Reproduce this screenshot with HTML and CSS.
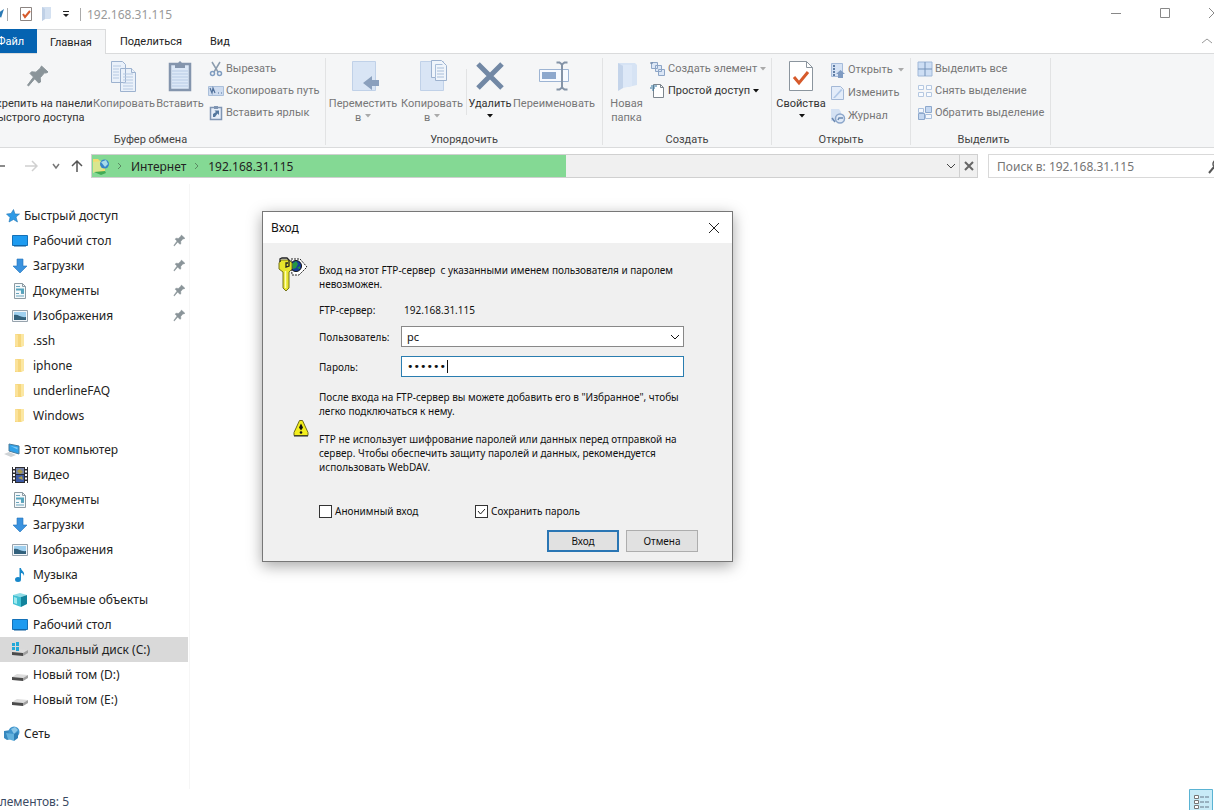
FILE: index.html
```
<!DOCTYPE html>
<html lang="ru">
<head>
  <meta charset="UTF-8" />
  <meta name="viewport" content="width=device-width, initial-scale=1" />
  <title>192.168.31.115</title>
  <link rel="stylesheet" href="styles.css">
</head>
<body>
  <!-- shared icons -->
  <svg class="sprite" aria-hidden="true">
    <symbol id="pin" viewBox="0 0 24 24">
      <path d="M15.500 2l6.500 6-2 1-1.500-.2-4.300 5 .3 4.200-1.800 1-4-4.200L2.500 22l-1-.8L7.500 13 4 9.500l1.500-1.700 4.500.4L14.500 4z" fill="#8a9499" stroke="#8a9499"/>
    </symbol>
    <symbol id="caret" viewBox="0 0 6 4"><path d="M0 0h6L3 3.500z" fill="currentColor"/></symbol>
    <symbol id="chevron" viewBox="0 0 10 6"><path d="M1 1l4 4 4-4" fill="none" stroke="currentColor"/></symbol>
    <symbol id="folder" viewBox="0 0 16 16">
      <path d="M3 1h7v13H3z" fill="#f6d67c"/><path d="M9 1h3v12l-3 1z" fill="#fbe7a3"/><path d="M3 1l3 1v12l-3-1z" fill="#fbe29a"/>
    </symbol>
    <symbol id="desktop" viewBox="0 0 16 14">
      <path d="M.5 1.500h15v10H.5z" fill="#1e9bf0" stroke="#1471b8"/><path d="M2 11.500h12v1H2z" fill="#0d5c9c"/>
    </symbol>
    <symbol id="download" viewBox="0 0 16 16"><path d="M5 1h6v7h4l-7 7-7-7h4z" fill="#3a92de" stroke="#2374ba" stroke-width=".6"/></symbol>
    <symbol id="doc" viewBox="0 0 16 16">
      <path d="M2.500.5h8l3 3v12h-11z" fill="#f4f8fa" stroke="#8d9ba3"/><path d="M10.500.5v3h3" fill="none" stroke="#8d9ba3"/>
      <path d="M4 3.500h4M4 10.500h3M9 10.500h3M4 13h8" stroke="#6aa5bd"/><path d="M4 5.500h8v2H4zM9 7h3v3H9z" fill="#54a4bd"/>
    </symbol>
    <symbol id="picture" viewBox="0 0 16 14">
      <path d="M.5 1.500h15v11H.5z" fill="#f3f6f9" stroke="#97a3ad"/><path d="M2 3h12v8H2z" fill="#9fd0ef"/>
      <path d="M2 6c4-1 7 3 12 2v3H2z" fill="#32617c"/>
    </symbol>
    <symbol id="computer" viewBox="0 0 16 16">
      <path d="M5 2l10 2v8L5 9z" fill="#2fa1e9" stroke="#4a7c9c"/><path d="M6.500 4l7 1.500v2z" fill="#82cbf5"/><path d="M0 12l5-2 7 3-5 2z" fill="#cfd3d6"/>
    </symbol>
    <symbol id="video" viewBox="0 0 16 16">
      <path d="M0 0h16v16H0z" fill="#2c2c30"/><path d="M4 1h8v6H4z" fill="#7683a8"/><path d="M4 8h8v7H4z" fill="#3d5aa5"/>
      <path d="M5 4l3-2 3 3-3 2zM6 11l4-2 1 4z" fill="#ab9b48"/><path d="M2 0v16M14 0v16" stroke="#fff" stroke-width="2" stroke-dasharray="2 1.500"/>
    </symbol>
    <symbol id="music" viewBox="0 0 16 16">
      <ellipse cx="6" cy="12.500" rx="3" ry="2.500" fill="#1687ca"/><path d="M7.500 1H9c0 3 4 3 3 8-.5-2-1.500-3-3-3v6H7.500z" fill="#1687ca"/>
    </symbol>
    <symbol id="cube" viewBox="0 0 16 16">
      <path d="M1 3l7-2 7 2-6 2z" fill="#8edce6"/><path d="M1 3l8 2v10l-8-3z" fill="#42c0d3"/><path d="M15 3L9 5v10l6-3z" fill="#12839c"/><path d="M2 5l3 1v6l-3-1z" fill="#9de9ee"/>
    </symbol>
    <symbol id="drive" viewBox="0 0 16 16">
      <path d="M0 10l5-3 11 1-5 3z" fill="#dcdcdc"/><path d="M0 10l11 1v3L0 13z" fill="#4b4b4b"/><path d="M11 11l5-3v3l-5 3z" fill="#a0a0a0"/>
    </symbol>
    <symbol id="globe" viewBox="0 0 16 16">
      <path d="M0 5l7-1v9l-4 1-3-2z" fill="#3688bf"/><circle cx="10" cy="6" r="5.500" fill="#3f94cc"/><path d="M7 3l4-2 3 3-4 4z" fill="#8cc7e8"/><path d="M2 7l8 1v7l-6-2z" fill="#62b1dd"/><path d="M10 8l4-2v6l-4 3z" fill="#2f7fb5"/>
    </symbol>
    <symbol id="sheet-check" viewBox="0 0 26 32">
      <path d="M1.500 1.500h17l6 6v23h-23z" fill="#fff" stroke="#8b959e"/><path d="M18.500 1.500v6h6" fill="none" stroke="#8b959e"/>
      <path d="M6 17l5 6 9-11" fill="none" stroke="#d65a2b" stroke-width="3"/>
    </symbol>
  </svg>

  <div class="explorer">
    <header class="titlebar">
      <svg class="icon-16" viewBox="0 0 16 16"><path d="M10 7l6-4-3 9z" fill="#2b7ab5"/></svg>
      <span class="divider"></span>
      <svg class="icon-16 title-check" viewBox="0 0 16 16"><path d="M2.500 1.500h11v13h-11z" fill="#fff" stroke="#8c8481"/><path d="M5 8l2 3 5-6" fill="none" stroke="#d65a2b" stroke-width="2"/></svg>
      <svg class="icon-16 title-folder" viewBox="0 0 16 16"><path d="M3 1h9v11l-1 1H6l-3 2z" fill="#d4e1f1"/><path d="M3 1l3 2v10l-3 2z" fill="#bfd0e6"/></svg>
      <svg class="title-menu" viewBox="0 0 8 8"><path d="M1 1.500h6" stroke="#222"/><path d="M1 4h6L4 7z" fill="#222"/></svg>
      <span class="divider"></span>
      <span class="title">192.168.31.115</span>
      <div class="window-buttons">
        <button aria-label="Свернуть"><svg viewBox="0 0 12 12"><path d="M1 6.500h10" stroke="#888"/></svg></button>
        <button aria-label="Развернуть"><svg viewBox="0 0 12 12"><path d="M1.500 1.500h9v9h-9z" fill="none" stroke="#888"/></svg></button>
        <button aria-label="Закрыть"><svg viewBox="0 0 12 12"><path d="M1 1l10 10M11 1L1 11" stroke="#888"/></svg></button>
      </div>
    </header>

    <nav class="tabs">
      <button class="tab tab-file">Файл</button>
      <button class="tab tab-active">Главная</button>
      <button class="tab">Поделиться</button>
      <button class="tab">Вид</button>
      <button class="collapse" aria-label="Свернуть ленту"><svg viewBox="0 0 12 8"><path d="M1 6l5-4 5 4" fill="none" stroke="#999"/></svg></button>
    </nav>

    <div class="ribbon">
      <section class="group group-clipboard">
        <div class="group-tools">
          <button class="big big-pin enabled"><svg class="icon-24"><use href="#pin"/></svg><span>Закрепить на панели<br>быстрого доступа</span></button>
          <button class="big big-copy">
            <svg viewBox="0 0 32 32"><g fill="#eaf1fa" stroke="#9db2cf"><path d="M3.500 1.500h11l3 3v18h-14zM12.500 8.500h11l4 4v19h-15z"/><path d="M23.500 8.500v4h4"/></g><path d="M5 6h8M5 9h6M5 12h6M5 15h6M5 18h6M15 14h10M15 17h10M15 20h10M15 23h10M15 26h10M15 29h10" stroke="#b6c9e2"/></svg>
            <span>Копировать</span></button>
          <button class="big big-paste">
            <svg viewBox="0 0 32 32"><path d="M6 4h20v26H6z" fill="#dce8f7" stroke="#8495ad" stroke-width="2.500"/><path d="M11 5h3c0-5 4-5 4 0h3v3H11z" fill="#8495ad"/><path d="M8 11h16M8 14h16M8 17h16M8 20h16M8 23h16M8 26h16" stroke="#b8cbe5"/></svg>
            <span>Вставить</span></button>
          <div class="small-list">
            <button class="small"><svg class="icon-16" viewBox="0 0 16 16"><path d="M4 1l6 10M12 1L6 11" stroke="#8b9cae" stroke-width="1.500"/><circle cx="4.500" cy="12.500" r="2" fill="none" stroke="#7f9cc0" stroke-width="1.500"/><circle cx="11.500" cy="12.500" r="2" fill="none" stroke="#7f9cc0" stroke-width="1.500"/></svg>Вырезать</button>
            <button class="small"><svg class="icon-16" viewBox="0 0 16 16"><path d="M.5 3.500h15v9H.5z" fill="#cedcf0" stroke="#aabfda"/><path d="M2 5l2 5 1-5 2 5M10 10h1M13 10h1" fill="none" stroke="#51719b" stroke-width="1.200"/></svg>Скопировать путь</button>
            <button class="small"><svg class="icon-16" viewBox="0 0 16 16"><path d="M2.500 2.500h11v12h-11z" fill="#e6eef9" stroke="#7f95b3" stroke-width="1.500"/><path d="M6 1h4v3H6z" fill="#7f95b3"/><path d="M5 12V9l3-2-1.500-1.500H11V10L9.500 8.500 7 12z" fill="#54789f"/></svg>Вставить ярлык</button>
          </div>
        </div>
        <div class="group-name">Буфер обмена</div>
      </section>

      <section class="group group-organize">
        <div class="group-tools">
          <button class="big big-move">
            <svg viewBox="0 0 32 32"><path d="M5.500 1.500h23v29h-23z" fill="#d9e5f5" stroke="#c0d1e8"/><path d="M16 23l9-7v4h7v6h-7v4z" fill="#8ba0bd"/></svg>
            <span>Переместить<br>в <svg class="caret"><use href="#caret"/></svg></span></button>
          <button class="big big-copy">
            <svg viewBox="0 0 32 32"><path d="M4.500 1.500h23v29h-23z" fill="#d9e5f5" stroke="#c0d1e8"/><path d="M15.500.5h10l5 5v15h-11v-3h-4z" fill="#f0f5fb" stroke="#9db2cf"/><path d="M19.500 17V4.500h7M21 8h7M21 11h7M21 14h7M21 17h7" fill="none" stroke="#a9bed9"/></svg>
            <span>Копировать<br>в <svg class="caret"><use href="#caret"/></svg></span></button>
          <span class="tool-line"></span>
          <button class="big big-delete enabled">
            <svg viewBox="0 0 32 32"><path d="M4 4l24 24M28 4L4 28" stroke="#7288a5" stroke-width="5"/></svg>
            <span>Удалить<br><svg class="caret"><use href="#caret"/></svg></span></button>
          <button class="big big-rename">
            <svg viewBox="0 0 32 32"><path d="M1.500 9.500h29v12h-29z" fill="#f7faff" stroke="#9db4d3"/><path d="M4 12h14v7H4z" fill="#8da8cd"/><path d="M18.500 2.500h3l2.500 2 2.500-2h3M18.500 29.500h3l2.500-2 2.500 2h3M24 4v24" fill="none" stroke="#8493a6" stroke-width="2"/></svg>
            <span>Переименовать</span></button>
        </div>
        <div class="group-name">Упорядочить</div>
      </section>

      <section class="group group-create">
        <div class="group-tools">
          <button class="big big-folder">
            <svg viewBox="0 0 32 32"><path d="M7 3h17l2 2v20l-9 2z" fill="#d6e3f4"/><path d="M7 3l5 3v22l-5 3z" fill="#c4d4ea"/><path d="M12 5h9v21l-9 2z" fill="#dde8f7"/></svg>
            <span>Новая<br>папка</span></button>
          <div class="small-list">
            <button class="small"><svg class="icon-16" viewBox="0 0 16 16"><g fill="#dce7f6" stroke="#8da5c6"><path d="M1.500 1.500h6v6h-6zM5.500 4.500h6v6h-6zM8.500 8.500h6v6h-6z"/></g><path d="M0 2h3" stroke="#657f9f"/></svg>Создать элемент <svg class="caret"><use href="#caret"/></svg></button>
            <button class="small enabled"><svg class="icon-16" viewBox="0 0 16 16"><path d="M3.500 1.500h7l3 3v10h-10z" fill="#fff" stroke="#7c858d"/><path d="M10.500 1.500v3h3" fill="none" stroke="#7c858d"/><path d="M1 3h6M0 5h5M2 7h2" stroke="#33749f"/></svg>Простой доступ <svg class="caret"><use href="#caret"/></svg></button>
          </div>
        </div>
        <div class="group-name">Создать</div>
      </section>

      <section class="group group-open">
        <div class="group-tools">
          <button class="big big-props enabled"><svg><use href="#sheet-check"/></svg><span>Свойства<br><svg class="caret"><use href="#caret"/></svg></span></button>
          <div class="small-list">
            <button class="small"><svg class="icon-16" viewBox="0 0 16 16"><path d="M1.500 1.500h11v13h-11z" fill="#d5e2f4" stroke="#a5bbda"/><path d="M3 4h2M3 7h2M3 10h2M3 13h2" stroke="#5f7da5" stroke-width="2"/><path d="M8 16v-4H6l4.500-4 4.500 4h-2v4z" fill="#7f9bc2"/></svg>Открыть <svg class="caret caret-end"><use href="#caret"/></svg></button>
            <button class="small"><svg class="icon-16" viewBox="0 0 16 16"><path d="M1.500 1.500h9l3 3v10h-12z" fill="#e3ecf9" stroke="#a3b8d6"/><path d="M3 13l8-9 1.500 1L5 13z" fill="#b0c8e7"/></svg>Изменить</button>
            <button class="small"><svg class="icon-16" viewBox="0 0 16 16"><path d="M1 1h8l2 3v9H1z" fill="#d4e1f3"/><circle cx="10" cy="10.500" r="4.500" fill="#dfe9f7" stroke="#8ca6ca" stroke-width="1.500"/><path d="M13 10H9l-1 2M2 10l3 4" fill="none" stroke="#6b89b1" stroke-width="1.500"/></svg>Журнал</button>
          </div>
        </div>
        <div class="group-name">Открыть</div>
      </section>

      <section class="group group-select">
        <div class="group-tools">
          <div class="small-list">
            <button class="small"><svg class="icon-16" viewBox="0 0 16 16"><path d="M1 1h14v14H1z" fill="#cddef4" stroke="#a0b8d8"/><path d="M8 1v14M1 8h14" stroke="#7592b8"/></svg>Выделить все</button>
            <button class="small"><svg class="icon-16" viewBox="0 0 16 16"><path d="M1.500 2.500h5v4h-5zM9.500 2.500h5v4h-5zM1.500 9.500h5v4h-5zM9.500 9.500h5v4h-5z" fill="#f8fbff" stroke="#b5c8e1"/></svg>Снять выделение</button>
            <button class="small"><svg class="icon-16" viewBox="0 0 16 16"><path d="M1.500 3.500h5v4h-5zM8.500 9.500h6v4h-6z" fill="#f4f8fd" stroke="#a9bfdc"/><path d="M8.500 1.500h6v6h-6zM1.500 8.500h6v6h-6z" fill="#c5d8f1" stroke="#8da8cc"/></svg>Обратить выделение</button>
          </div>
        </div>
        <div class="group-name">Выделить</div>
      </section>
    </div>

    <div class="navbar">
      <div class="nav-buttons">
        <button class="nav-back" aria-label="Назад"><svg viewBox="0 0 14 14"><path d="M13 7H1M6 2L1 7l5 5" fill="none" stroke="#666" stroke-width="1.500"/></svg></button>
        <button class="nav-forward" aria-label="Вперед"><svg viewBox="0 0 14 14"><path d="M1 7h12M8 2l5 5-5 5" fill="none" stroke="#d0d0d0" stroke-width="1.500"/></svg></button>
        <button class="nav-recent" aria-label="Последние расположения"><svg viewBox="0 0 14 14"><path d="M4 5l3 4 3-4" fill="none" stroke="#777" stroke-width="1.500"/></svg></button>
        <button class="nav-up" aria-label="Вверх"><svg viewBox="0 0 14 14"><path d="M7 13V2M2 7l5-5 5 5" fill="none" stroke="#555" stroke-width="1.500"/></svg></button>
      </div>
      <div class="address">
        <div class="crumbs">
          <svg class="site-icon" viewBox="0 0 18 18"><path d="M1 2h5l2 2h5v11H1z" fill="#f2dc70"/><path d="M1 5l10-1v9L1 16z" fill="#d9e690"/><circle cx="12.500" cy="7" r="4.500" fill="#3684c9"/><path d="M9 5l5-2 2 4-3 3z" fill="#a7dbe9"/><path d="M2 15l11-1 1 2-5 2z" fill="#42ab55"/></svg>
          <svg class="crumb-arrow" viewBox="0 0 6 10"><path d="M1 2l3 3-3 3" fill="none" stroke="#5a8a62"/></svg>
          <a href="#">Интернет</a>
          <svg class="crumb-arrow" viewBox="0 0 6 10"><path d="M1 2l3 3-3 3" fill="none" stroke="#5a8a62"/></svg>
          <a href="#">192.168.31.115</a>
          <svg class="address-chevron"><use href="#chevron"/></svg>
        </div>
        <button class="stop" aria-label="Остановить"><svg viewBox="0 0 12 12"><path d="M2 2l8 8M10 2l-8 8" stroke="#666" stroke-width="2"/></svg></button>
      </div>
      <div class="search">
        <input type="text" placeholder="Поиск в: 192.168.31.115" aria-label="Поиск в: 192.168.31.115">
        <svg class="icon-16" viewBox="0 0 16 16"><circle cx="9" cy="6" r="4" fill="none" stroke="#555" stroke-width="1.500"/><path d="M6 9l-5 6" stroke="#555" stroke-width="2"/></svg>
      </div>
    </div>

    <main class="content">
      <aside class="sidebar">
        <a class="place root" href="#"><svg class="icon-16" viewBox="0 0 16 16"><path d="M9.500 1.500l1.500 4.500h4.500L12 9l1.500 5-4-2.500L5 14l1-4.500L2.500 6 7 5.500z" fill="#2e9ae6" stroke="#2277b5" stroke-width=".6"/></svg>Быстрый доступ</a>
        <a class="place" href="#"><svg class="icon-16"><use href="#desktop"/></svg>Рабочий стол<svg class="pin"><use href="#pin"/></svg></a>
        <a class="place" href="#"><svg class="icon-16"><use href="#download"/></svg>Загрузки<svg class="pin"><use href="#pin"/></svg></a>
        <a class="place" href="#"><svg class="icon-16"><use href="#doc"/></svg>Документы<svg class="pin"><use href="#pin"/></svg></a>
        <a class="place" href="#"><svg class="icon-16"><use href="#picture"/></svg>Изображения<svg class="pin"><use href="#pin"/></svg></a>
        <a class="place" href="#"><svg class="icon-16"><use href="#folder"/></svg>.ssh</a>
        <a class="place" href="#"><svg class="icon-16"><use href="#folder"/></svg>iphone</a>
        <a class="place" href="#"><svg class="icon-16"><use href="#folder"/></svg>underlineFAQ</a>
        <a class="place" href="#"><svg class="icon-16"><use href="#folder"/></svg>Windows</a>

        <a class="place root section" href="#"><svg class="icon-16"><use href="#computer"/></svg>Этот компьютер</a>
        <a class="place" href="#"><svg class="icon-16"><use href="#video"/></svg>Видео</a>
        <a class="place" href="#"><svg class="icon-16"><use href="#doc"/></svg>Документы</a>
        <a class="place" href="#"><svg class="icon-16"><use href="#download"/></svg>Загрузки</a>
        <a class="place" href="#"><svg class="icon-16"><use href="#picture"/></svg>Изображения</a>
        <a class="place" href="#"><svg class="icon-16"><use href="#music"/></svg>Музыка</a>
        <a class="place" href="#"><svg class="icon-16"><use href="#cube"/></svg>Объемные объекты</a>
        <a class="place" href="#"><svg class="icon-16"><use href="#desktop"/></svg>Рабочий стол</a>
        <a class="place selected" href="#"><svg class="icon-16" viewBox="0 0 16 16"><use href="#drive" width="16" height="16"/><path d="M0 1h3v3H0zM4 0h3v4H4zM0 5h3v3H0zM4 5h3v4H4z" fill="#21a8d8"/></svg>Локальный диск (C:)</a>
        <a class="place" href="#"><svg class="icon-16"><use href="#drive"/></svg>Новый том (D:)</a>
        <a class="place" href="#"><svg class="icon-16"><use href="#drive"/></svg>Новый том (E:)</a>

        <a class="place root section" href="#"><svg class="icon-16"><use href="#globe"/></svg>Сеть</a>
      </aside>
    </main>

    <footer class="statusbar">
      <span>Элементов: 5</span>
      <button class="view-mode" aria-label="Таблица"><svg viewBox="0 0 24 22"><path d="M.5.500h23v21H.5z" fill="#c8ebf7" stroke="#5ab3d3"/><path d="M5.500 6.500h4v3h-4zM5.500 11.500h4v3h-4zM5.500 16.500h4v3h-4z" fill="#fff" stroke="#777"/><path d="M11 8h4M16 8h4M11 13h4M16 13h4M11 18h4M16 18h4" stroke="#678"/></svg></button>
    </footer>
  </div>

  <form class="dialog" role="dialog" aria-labelledby="dialogTitle">
    <div class="dialog-head">
      <span id="dialogTitle">Вход</span>
      <button type="button" aria-label="Закрыть"><svg viewBox="0 0 12 12"><path d="M1 1l10 10M11 1L1 11" stroke="#222"/></svg></button>
    </div>
    <div class="dialog-body">
      <div class="dialog-row">
        <svg class="key-icon" viewBox="0 0 32 34"><path d="M14 2h9l7 8-8 8h-7z" fill="#fff" stroke="#222" stroke-dasharray="2 1"/><circle cx="19" cy="9" r="5.500" fill="#183f9c" stroke="#111"/><path d="M15 7l4-3 2 3-2 4-3 1zM20 11l3-2v3z" fill="#279744"/><path d="M4 3h8l3 3v6l-3 3v16l-3 3-3-3V15l-4-3V6z" fill="#e8e52b" stroke="#77751a"/><path d="M8.500 14v17" stroke="#fffdb0" stroke-width="1.500"/><path d="M3 5V2l2-1h5l2 2v6l-3 1V6h2" fill="none" stroke="#222" stroke-width="1.300"/></svg>
        <p class="message">Вход на этот FTP-сервер&nbsp; с указанными именем пользователя и паролем невозможен.</p>
      </div>
      <div class="fields">
        <span>FTP-сервер:</span>
        <span class="server">192.168.31.115</span>
        <label for="user">Пользователь:</label>
        <div class="combo">
          <select id="user"><option>pc</option></select>
          <svg><use href="#chevron"/></svg>
        </div>
        <label for="password">Пароль:</label>
        <div class="secret">
          <input id="password" type="password" value="secret">
          <span class="cursor"></span>
        </div>
      </div>
      <p class="message note">После входа на FTP-сервер вы можете добавить его в "Избранное", чтобы легко подключаться к нему.</p>
      <div class="dialog-row warning">
        <svg class="warn-icon" viewBox="0 0 16 18"><path d="M6.500 1.500h3l5.500 12v3H1v-3z" fill="#f3ee1c" stroke="#6d6a18"/><path d="M1 17h14" stroke="#222"/><path d="M8 4.500l2 4-2 3-2-3z" fill="#111"/><circle cx="8" cy="13.500" r="1.300" fill="#111"/></svg>
        <p class="message">FTP не использует шифрование паролей или данных перед отправкой на сервер. Чтобы обеспечить защиту паролей и данных, рекомендуется использовать WebDAV.</p>
      </div>
      <div class="checks">
        <label><input type="checkbox">Анонимный вход</label>
        <label><input type="checkbox" checked>Сохранить пароль</label>
      </div>
      <div class="actions">
        <button class="btn btn-primary">Вход</button>
        <button type="button" class="btn">Отмена</button>
      </div>
    </div>
  </form>
</body>
</html>
```

FILE: styles.css
```
* {
  box-sizing: border-box;
}

body {
  margin: 0;
  overflow: hidden;
  position: relative;
  background: #fff;
  color: #222;
  font-family: "Noto Sans", "Open Sans", sans-serif;
  font-size: 12px;
}

button {
  font: inherit;
  color: inherit;
  background: none;
  border: 0;
  padding: 0;
}

a {
  color: inherit;
  text-decoration: none;
}

p {
  margin: 0;
}

svg {
  flex: none;
}

.sprite {
  position: absolute;
  width: 0;
  height: 0;
}

.icon-16 {
  width: 16px;
  height: 16px;
}

/* the window runs past both sides of the screen */
.explorer {
  display: flex;
  flex-direction: column;
  height: 100vh;
  margin: 0 -16px;
}

.titlebar {
  display: flex;
  align-items: center;
  height: 28px;
  padding-left: 4px;
}

.divider {
  width: 1px;
  height: 13px;
  margin: 0 6px 0 3px;
  background: #aaa;
}

.title-check {
  margin-left: 4px;
}

.title-folder {
  margin-left: 5px;
}

.title-menu {
  width: 8px;
  height: 8px;
  margin: 0 7px;
}

.title {
  color: #999;
}

.window-buttons {
  display: flex;
  margin-left: auto;
  margin-right: -8px;
}

.window-buttons button {
  width: 49px;
  height: 28px;
}

.window-buttons svg {
  width: 12px;
  height: 12px;
}

.tabs {
  display: flex;
  height: 26px;
  padding-top: 1px;
  border-bottom: 1px solid #dadbdc;
  font-family: Roboto, sans-serif;
  font-size: 11px;
}

.tab {
  padding: 0 14px;
}

.tab-file {
  width: 53px;
  padding: 0;
  text-align: center;
  background: #0563b1;
  color: #fff;
}

.tab-active {
  width: 69px;
  padding: 0;
  margin-bottom: -1px;
  background: #f5f6f7;
  border: 1px solid #dadbdc;
  border-width: 1px 1px 0 0;
}

.collapse {
  margin-left: auto;
  margin-right: 17px;
}

.collapse svg {
  width: 12px;
  height: 8px;
}

.ribbon {
  display: flex;
  height: 94px;
  padding: 4px 0 2px;
  background: #f5f6f7;
  border-bottom: 1px solid #dadbdc;
  font-family: Roboto, sans-serif;
  font-size: 11px;
  line-height: 14px;
  color: #777;
}

.group {
  display: flex;
  flex: none;
  flex-direction: column;
  border-right: 1px solid #e2e3e4;
}

.group-tools {
  display: flex;
  flex: 1;
}

.group-name {
  height: 12px;
  text-align: center;
  color: #444;
}

.group-clipboard {
  width: 342px;
}

.group-clipboard .group-name {
  padding-right: 8px;
}

.group-organize {
  width: 277px;
}

.group-create {
  width: 169px;
}

.group-open {
  width: 139px;
}

.group-select {
  width: 140px;
  padding-left: 6px;
}

.big {
  display: flex;
  flex: none;
  flex-direction: column;
  align-items: center;
  padding-top: 2px;
  white-space: nowrap;
}

.big > svg {
  width: 32px;
  height: 32px;
  margin-bottom: 5px;
}

.big > .icon-24 {
  width: 24px;
  height: 24px;
  margin: 4px 0 9px;
}

.big-pin {
  width: 108px;
}

.big-copy {
  width: 64px;
}

.big-paste {
  width: 48px;
}

.big-move {
  width: 74px;
}

.big-delete {
  width: 46px;
}

.big-rename {
  width: 82px;
}

.big-folder {
  width: 47px;
}

.big-props {
  width: 58px;
}

.enabled {
  color: #333;
}

.caret {
  width: 6px;
  height: 4px;
  margin-left: 1px;
  vertical-align: 3px;
  color: #aaa;
}

.small .caret-end {
  margin-left: 3px;
}

.enabled .caret {
  color: #111;
}

.tool-line {
  width: 1px;
  height: 46px;
  margin: 11px 0 0 2px;
  background: #e2e3e4;
}

.small-list {
  display: flex;
  flex-direction: column;
}

.group-clipboard .small-list {
  padding-left: 4px;
}

.small {
  display: flex;
  align-items: center;
  gap: 2px;
  height: 22px;
  white-space: nowrap;
}

.group-open .small {
  height: 23px;
}

.navbar {
  display: flex;
  height: 36px;
  padding: 6px 0;
}

.nav-buttons {
  display: flex;
  align-items: center;
  width: 107px;
  padding-left: 4px;
}

.nav-buttons button {
  height: 14px;
  text-align: left;
}

.nav-buttons svg {
  width: 14px;
  height: 14px;
  margin-left: 4px;
}

.nav-buttons .nav-back {
  width: 32px;
}

.nav-buttons .nav-forward {
  width: 25px;
}

.nav-buttons .nav-recent,
.nav-buttons .nav-up {
  width: 21px;
}

.address {
  display: flex;
  flex: 1;
  border: 1px solid #d0d0d0;
  background: #f0f0f0;
  margin-right: 10px;
}

/* loading progress fills the address line */
.crumbs {
  display: flex;
  flex: 1;
  align-items: center;
  background: linear-gradient(to right, #84d994 54.7%, transparent 54.7%);
}

.crumbs a {
  margin-right: 8px;
}

.site-icon {
  width: 18px;
  height: 18px;
  margin-right: 7px;
}

.crumb-arrow {
  width: 6px;
  height: 10px;
  margin-right: 8px;
}

.address-chevron {
  width: 10px;
  height: 6px;
  margin: 0 3px 0 auto;
  color: #444;
}

.stop {
  width: 18px;
  border-left: 1px solid #d0d0d0;
}

.stop svg {
  display: block;
  width: 12px;
  height: 12px;
  margin: auto;
}

.search {
  display: flex;
  align-items: center;
  width: 242px;
  border: 1px solid #d9d9d9;
}

.search input {
  flex: 1;
  min-width: 0;
  padding: 0 8px;
  border: 0;
  font: inherit;
}

.search input::placeholder {
  color: #757575;
}

.search svg {
  margin-right: 5px;
}

.content {
  display: flex;
  flex: 1;
  min-height: 0;
}

.sidebar {
  width: 206px;
  padding-top: 19px;
  border-right: 1px solid #f6f6f6;
}

.place {
  display: flex;
  align-items: center;
  gap: 5px;
  height: 25px;
  padding-left: 28px;
  margin-right: 1px;
}

.place.root {
  padding-left: 20px;
  gap: 4px;
}

.place.section {
  margin-top: 9px;
}

.place.selected {
  background: #d9d9d9;
}

.pin {
  width: 13px;
  height: 13px;
  margin: 0 2px 0 auto;
}

.statusbar {
  display: flex;
  justify-content: space-between;
  height: 21px;
  padding: 0 17px 0 8px;
  line-height: 25px;
  color: #3b4a63;
}

.view-mode svg {
  display: block;
  width: 24px;
  height: 22px;
}

/* login window floats over the explorer */
.dialog {
  position: absolute;
  top: 211px;
  left: 262px;
  width: 471px;
  border: 1px solid #777;
  background: #f0f0f0;
  box-shadow: 0 4px 14px rgba(0, 0, 0, 0.35);
  font-size: 10px;
  line-height: 14px;
  color: #111;
}

.dialog-head {
  display: flex;
  align-items: center;
  justify-content: space-between;
  height: 31px;
  padding: 0 12px 0 8px;
  background: #fff;
  font-size: 12px;
}

.dialog-head svg {
  display: block;
  width: 12px;
  height: 12px;
}

.dialog-body {
  padding: 14px 34px 9px 14px;
}

.dialog-row {
  display: flex;
}

.dialog-row .message {
  padding-top: 6px;
}

.key-icon {
  width: 32px;
  height: 34px;
  margin-right: 10px;
}

.fields {
  display: grid;
  grid-template-columns: 82px 283px;
  align-items: center;
  row-gap: 9px;
  margin: 12px 0 0 42px;
}

.server {
  padding-left: 3px;
}

.combo,
.secret {
  position: relative;
}

.combo select,
.secret input {
  display: block;
  width: 100%;
  height: 21px;
  padding: 0 5px;
  border: 1px solid #888;
  border-radius: 0;
  outline: 0;
  background: #fff;
  color: #111;
  font: inherit;
  font-size: 11px;
  appearance: none;
}

.secret input {
  border-color: #2a7db0;
  font-family: "DejaVu Sans", sans-serif;
}

.combo svg {
  position: absolute;
  top: 8px;
  right: 4px;
  width: 10px;
  height: 6px;
}

.cursor {
  position: absolute;
  top: 4px;
  left: 46px;
  width: 1px;
  height: 13px;
  background: #111;
}

.note {
  margin: 13px 0 0 42px;
}

.warn-icon {
  width: 16px;
  height: 18px;
  margin: 1px 10px 0 16px;
}

.warning .message {
  padding-top: 14px;
}

.checks {
  display: flex;
  margin: 30px 0 0 42px;
}

.checks label {
  display: flex;
  align-items: center;
  gap: 3px;
  width: 156px;
  height: 14px;
}

.checks input {
  width: 13px;
  height: 13px;
  margin: 0;
  border: 1px solid #333;
  background: #fff;
  appearance: none;
}

.checks input:checked {
  background: #fff url("data:image/svg+xml,%3Csvg xmlns='http://www.w3.org/2000/svg' viewBox='0 0 11 11'%3E%3Cpath d='M2 5l2.500 3L9 3' fill='none' stroke='%23222'/%3E%3C/svg%3E");
}

.actions {
  display: flex;
  justify-content: flex-end;
  gap: 7px;
  margin-top: 12px;
}

.btn {
  width: 72px;
  height: 22px;
  border: 1px solid #adadad;
  background: #e1e1e1;
}

.btn-primary {
  border: 2px solid #2a76b4;
}
```
